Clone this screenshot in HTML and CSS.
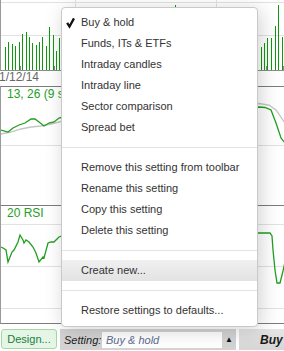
FILE: index.html
```html
<!DOCTYPE html>
<html lang="en">
<head>
<meta charset="UTF-8">
<meta name="viewport" content="width=device-width, initial-scale=1.0">
<title>Chart settings</title>
<link rel="stylesheet" href="styles.css">
</head>
<body>
  <div class="chart">
    <div class="panel volume">
      <svg width="284" height="71" viewBox="0 0 284 71">
        <path class="grid" d="M0 2.5H284M0 35.5H284M74.5 0V70M215.5 0V70"/>
        <path class="bars" d="M4.5 47V70M7.5 42V70M11.5 44V70M14.5 46V70M18.5 42V70M21.5 34V70M25.5 32V70M28.5 37V70M31.5 43V70M35.5 45V70M38.5 42V70M41.5 37V70M45.5 46V70M48.5 27V70M52.5 35V70M55.5 51V70M58.5 38V70M174.5 5V70M260.5 47V70M263.5 43V70M266.5 38V70M270.5 38V70M274.5 26V70M277.5 5V70M281.5 37V70"/>
        <path class="ticks" d="M19.5 66V70M53.5 66V70M265.5 66V70M282.5 66V70"/>
        <path class="base" d="M0 70.5H284"/>
      </svg>
    </div>
    <div class="date">1/12/14</div>
    <div class="panel macd">
      <p class="label">13, 26 (9 signal)</p>
      <svg width="284" height="104" viewBox="0 0 284 104">
        <path class="grid" d="M0 44.5H284"/>
        <polyline class="slow" points="0,33 10,31 20,28 30,26 40,25 50,23 62,20 160,8 258,2.5 268,4 275,9 284,22"/>
        <polyline class="fast" points="0,29 7,31 12,27 18,24 24,22 30,18 34,18 38,21 43,25 48,22 53,21 58,17 62,16 160,8 258,6 264,6.5 270,9 275,22 280,37 284,42"/>
      </svg>
    </div>
    <div class="panel rsi">
      <p class="label">20 RSI</p>
      <svg width="284" height="103" viewBox="0 0 284 103">
        <path class="grid" d="M0 4.5H284M0 46.5H284M0 88.5H284"/>
        <polyline class="fast" points="0,27 2,28 5,30 7,42 11,32 13,30 17,22 19,15 22,20 23,23 25,20 28,22 32,27 35,33 38,42 42,37 43,38 47,23 50,22 53,22 55,20 58,17 61,16 160,20 258,13 269,13 271,16 272,30 274,50 276,63 279,63 282,51 284,42"/>
      </svg>
    </div>
  </div>

  <div class="toolbar">
    <button class="design">Design...</button>
    <div class="setting">
      <span class="setting-label">Setting:</span>
      <span class="setting-input">Buy &amp; hold</span>
      <span class="setting-arrow">&#9650;</span>
    </div>
    <button class="buy">Buy</button>
  </div>

  <ul class="menu">
    <li class="checked">
      <svg class="tick" width="20" height="21" viewBox="0 0 20 21"><path d="M5.4 10.8L7.9 14.8L12.6 6.2"/></svg>Buy &amp; hold
    </li>
    <li>Funds, ITs &amp; ETFs</li>
    <li>Intraday candles</li>
    <li>Intraday line</li>
    <li>Sector comparison</li>
    <li>Spread bet</li>
    <li class="sep"></li>
    <li>Remove this setting from toolbar</li>
    <li>Rename this setting</li>
    <li>Copy this setting</li>
    <li>Delete this setting</li>
    <li class="sep"></li>
    <li class="hover">Create new...</li>
    <li class="sep"></li>
    <li>Restore settings to defaults...</li>
  </ul>
</body>
</html>
```

FILE: styles.css
```css
body{
  margin: 0;
  width: 284px;
  height: 351px;
  overflow: hidden;
  background-color: white;
  font-family: "Liberation Sans", Arial, sans-serif;
  position: relative;
}

.chart svg{
  display: block;
}

.grid{
  stroke: #e2e2e2;
  stroke-width: 1;
  fill: none;
}

.bars{
  stroke: #0c9a0c;
  stroke-width: 1;
}

.ticks{
  stroke: #8a8a8a;
  stroke-width: 1;
}

.base{
  stroke: #8c8c8c;
  stroke-width: 1;
}

.fast{
  fill: none;
  stroke: #1f9f1f;
  stroke-width: 1.3;
}

.slow{
  fill: none;
  stroke: #c4c4c4;
  stroke-width: 1.3;
}

.panel{
  border-left: 1px solid #9a9a9a;
}

.date{
  height: 15px;
  font-size: 12px;
  line-height: 12px;
  color: #666;
  margin-left: -1px;
}

.macd{
  border-top: 1px solid #7c7c7c;
  height: 118px;
}

.rsi{
  border-top: 1px solid #7c7c7c;
  border-bottom: 1px solid #7c7c7c;
  height: 117px;
}

.label{
  margin: 0;
  padding-left: 6px;
  height: 14px;
  font-size: 12px;
  line-height: 14px;
  color: #24a024;
  white-space: nowrap;
}

.toolbar{
  display: flex;
  margin-top: 5px;
  gap: 3px;
  height: 21px;
}

.design{
  margin-left: 1px;
  width: 56px;
  height: 20px;
  padding: 0;
  border: 1px solid #a6d8a6;
  border-radius: 3px;
  background-color: #e6f6e6;
  color: #16803c;
  font-family: inherit;
  font-size: 11px;
}

.setting{
  display: flex;
  align-items: center;
  width: 172px;
  padding-left: 4px;
  background-color: #d3d3d3;
  font-style: italic;
  font-size: 11px;
}

.setting-label{
  width: 38px;
  color: #222;
}

.setting-input{
  width: 116px;
  height: 16px;
  line-height: 16px;
  padding-left: 4px;
  background-color: white;
  color: #5b6b8e;
}

.setting-arrow{
  width: 14px;
  text-align: center;
  font-style: normal;
  font-size: 8px;
  color: #111;
}

.buy{
  flex: 1;
  padding: 0 0 0 21px;
  border: none;
  background: linear-gradient(#e6e6e6, #d6d6d6);
  text-align: left;
  font-family: inherit;
  font-size: 12px;
  font-weight: bold;
  font-style: italic;
  color: #1a1a1a;
}

.menu{
  position: absolute;
  left: 61px;
  top: 7px;
  width: 195px;
  margin: 0;
  padding: 4px 0 5px;
  list-style: none;
  background-color: white;
  border: 1px solid #c9c9c9;
  border-radius: 4px;
  box-shadow: 3px 3px 20px rgba(0, 0, 0, 0.18);
  font-size: 11px;
  color: #333;
}

.menu li{
  display: flex;
  height: 21px;
  line-height: 21px;
  padding-left: 19px;
  white-space: nowrap;
}

.menu li.checked{
  padding-left: 0;
}

.tick{
  flex: none;
  width: 19px;
}

.tick path{
  fill: none;
  stroke: #111;
  stroke-width: 2.4;
  stroke-linejoin: miter;
}

.menu li.sep{
  height: 1px;
  margin: 9px 0;
  padding: 0;
  background-color: #e3e3e3;
}

.menu li.hover{
  background: linear-gradient(#f0f0f0, #e3e3e3);
}
```
